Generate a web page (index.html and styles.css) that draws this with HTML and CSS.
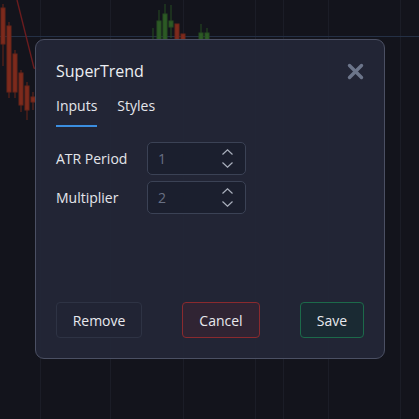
FILE: index.html
```html
<!DOCTYPE html>
<html lang="en">
<head>
    <meta charset="UTF-8">
    <meta name="viewport" content="width=device-width, initial-scale=1.0">
    <title>SuperTrend settings</title>
    <link rel="stylesheet" href="styles.css">
</head>
<body>
    <svg class="chart" width="419" height="419" viewBox="0 0 419 419">
      <g stroke="#1b1d27" stroke-width="1">
        <line x1="40.5" y1="0" x2="40.5" y2="419"/>
        <line x1="110.5" y1="0" x2="110.5" y2="419"/>
        <line x1="183.5" y1="0" x2="183.5" y2="419"/>
        <line x1="255.5" y1="0" x2="255.5" y2="419"/>
        <line x1="283.5" y1="0" x2="283.5" y2="419"/>
        <line x1="328.5" y1="0" x2="328.5" y2="419"/>
        <line x1="400.5" y1="0" x2="400.5" y2="419"/>
      </g>
      <line x1="0" y1="36.5" x2="419" y2="36.5" stroke="#243045"/>
      <!-- red candles, left -->
      <g fill="#7d2a1c" stroke="#6a2418">
        <line x1="3" y1="4" x2="3" y2="66"/>
        <rect x="1" y="8" width="4" height="36"/>
        <line x1="9" y1="22" x2="9" y2="98"/>
        <rect x="7" y="26" width="4" height="66"/>
        <line x1="15" y1="50" x2="15" y2="98"/>
        <rect x="13" y="54" width="4" height="38"/>
        <line x1="21" y1="70" x2="21" y2="112"/>
        <rect x="19" y="73" width="4" height="32"/>
        <line x1="27" y1="82" x2="27" y2="120"/>
        <rect x="25" y="86" width="4" height="24"/>
        <line x1="33" y1="92" x2="33" y2="110"/>
        <rect x="31" y="97" width="4" height="5"/>
      </g>
      <polyline points="17,0 34,68 40,70" fill="none" stroke="#6a1c1e" stroke-width="1.4"/>
      <!-- candles, middle -->
      <g fill="#2c5a25" stroke="#264d20">
        <line x1="153" y1="28" x2="153" y2="40"/>
        <line x1="159" y1="10" x2="159" y2="40"/>
        <rect x="157" y="21" width="4" height="19"/>
        <line x1="165" y1="4" x2="165" y2="40"/>
        <rect x="163" y="14" width="4" height="26"/>
        <line x1="171" y1="5" x2="171" y2="38"/>
        <rect x="169" y="21" width="4" height="6"/>
        <line x1="201" y1="24" x2="201" y2="40"/>
        <rect x="199" y="33" width="4" height="7"/>
        <line x1="207" y1="28" x2="207" y2="40"/>
        <rect x="205" y="33" width="4" height="7"/>
      </g>
      <g fill="#7d2a1c" stroke="#6a2418">
        <rect x="175" y="24" width="4" height="16"/>
        <rect x="181" y="34" width="4" height="6"/>
      </g>
    </svg>

    <div class="dialog">
      <div class="dialog-header">
        <h2 class="dialog-title">SuperTrend</h2>
        <button class="close-btn" aria-label="Close">
          <svg width="17" height="17" viewBox="0 0 17 17">
            <path d="M2.5 2.5 L14.5 14.5 M14.5 2.5 L2.5 14.5" stroke="#6c758a" stroke-width="3.4" stroke-linecap="round"/>
          </svg>
        </button>
      </div>

      <div class="tabs">
        <span class="tab active">Inputs</span>
        <span class="tab">Styles</span>
      </div>

      <div class="fields">
        <div class="field">
          <label for="atr">ATR Period</label>
          <div class="number-input">
            <input type="text" id="atr" value="1">
            <div class="spinner">
              <svg width="11" height="6" viewBox="0 0 11 6"><path d="M0.5 5.5 L5.5 0.8 L10.5 5.5" fill="none" stroke="#aab0bd" stroke-width="1.2"/></svg>
              <svg width="11" height="6" viewBox="0 0 11 6"><path d="M0.5 0.5 L5.5 5.2 L10.5 0.5" fill="none" stroke="#aab0bd" stroke-width="1.2"/></svg>
            </div>
          </div>
        </div>
        <div class="field">
          <label for="mult">Multiplier</label>
          <div class="number-input">
            <input type="text" id="mult" value="2">
            <div class="spinner">
              <svg width="11" height="6" viewBox="0 0 11 6"><path d="M0.5 5.5 L5.5 0.8 L10.5 5.5" fill="none" stroke="#aab0bd" stroke-width="1.2"/></svg>
              <svg width="11" height="6" viewBox="0 0 11 6"><path d="M0.5 0.5 L5.5 5.2 L10.5 0.5" fill="none" stroke="#aab0bd" stroke-width="1.2"/></svg>
            </div>
          </div>
        </div>
      </div>

      <div class="actions">
        <button class="btn btn-remove">Remove</button>
        <button class="btn btn-cancel">Cancel</button>
        <button class="btn btn-save">Save</button>
      </div>
    </div>
</body>
</html>
```

FILE: styles.css
```css
body {
  margin: 0;
  width: 419px;
  height: 419px;
  overflow: hidden;
  position: relative;
  background-color: #13141c;
  font-family: "Open Sans", "Noto Sans", sans-serif;
  color: #e4e5eb;
  box-sizing: border-box;
  padding: 39px 0 0 35px;
}

.chart {
  position: absolute;
  left: 0;
  top: 0;
}

.dialog {
  position: relative;
  width: 350px;
  height: 320px;
  box-sizing: border-box;
  padding: 20px;
  background-color: rgba(35, 38, 55, 0.97);
  border: 1px solid #4b5063;
  border-radius: 9px;
  display: flex;
  flex-direction: column;
}

.dialog-header {
  display: flex;
  justify-content: space-between;
  align-items: center;
  height: 22px;
}

.dialog-title {
  margin: 0;
  font-size: 16px;
  font-weight: 500;
  line-height: 22px;
  color: #eceef2;
}

.close-btn {
  background: none;
  border: none;
  padding: 0;
  width: 17px;
  height: 17px;
  cursor: pointer;
}

.close-btn svg {
  display: block;
}

.tabs {
  display: flex;
  gap: 20px;
  margin-top: 14px;
}

.tab {
  font-size: 14px;
  font-weight: 500;
  line-height: 20px;
  padding-bottom: 9px;
  border-bottom: 2px solid transparent;
  color: #e4e5eb;
}

.tab.active {
  border-bottom-color: #3b8ee0;
}

.fields {
  display: flex;
  flex-direction: column;
  gap: 6px;
  margin-top: 15px;
  flex: 1;
}

.field {
  display: flex;
  align-items: center;
}

.field label {
  width: 91px;
  font-size: 14px;
  font-weight: 500;
  color: #e4e5eb;
}

.number-input {
  display: flex;
  align-items: center;
  width: 99px;
  height: 33px;
  box-sizing: border-box;
  border: 1px solid #3b4255;
  border-radius: 5px;
  background-color: #1b1f2e;
  padding: 0 12px 0 10px;
}

.number-input input {
  flex: 1;
  width: 0;
  background: none;
  border: none;
  outline: none;
  padding: 0;
  font-family: inherit;
  font-size: 14px;
  color: #687084;
}

.spinner {
  display: flex;
  flex-direction: column;
  gap: 7px;
}

.spinner svg {
  display: block;
}

.actions {
  display: flex;
  justify-content: space-between;
}

.btn {
  height: 36px;
  box-sizing: border-box;
  border-radius: 4px;
  font-family: inherit;
  font-size: 14px;
  font-weight: 500;
  color: #e8e9ee;
  cursor: pointer;
}

.btn-remove {
  width: 86px;
  border: 1px solid #2e3344;
  background-color: #212434;
}

.btn-cancel {
  width: 78px;
  border: 1px solid #8a2a2e;
  background-color: #302433;
}

.btn-save {
  width: 64px;
  border: 1px solid #1c6a4a;
  background-color: #1a2a33;
}
```
